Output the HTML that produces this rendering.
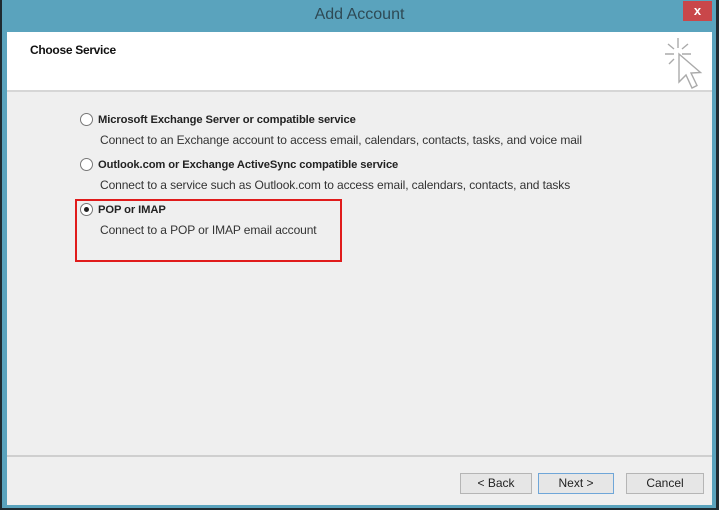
<!DOCTYPE html>
<html><head><style>
body{margin:0;width:719px;height:510px;background:#1f2a30;position:relative;overflow:hidden;font-family:"Liberation Sans",sans-serif}
.frame{position:absolute;left:2px;top:0;width:714px;height:508px;background:#5aa3bd}
.title{position:absolute;left:0;width:719px;top:6px;text-align:center;font-size:16px;color:#2e4a55}
.close{position:absolute;left:683px;top:1px;width:29px;height:20px;background:#c9474a;color:#fff;font-size:13px;text-align:center;line-height:20px;font-weight:bold}
.content{position:absolute;left:7px;top:32px;width:705px;height:473px;background:#efefef}
.head{position:absolute;left:0;top:0;width:705px;height:58px;background:#fff;border-bottom:2px solid #d6d6d6}
.h{position:absolute;left:23px;top:11px;font-size:12px;font-weight:bold;color:#111;letter-spacing:-0.3px}
.opt{position:absolute;left:80px;font-size:12px;color:#222}
.opt b{position:absolute;left:18px;top:1px;white-space:nowrap;font-size:11.2px;letter-spacing:-0.1px}
.opt span{position:absolute;left:20px;top:20px;white-space:nowrap;color:#333;font-size:12px;letter-spacing:-0.1px}
.r{position:absolute;left:0;top:0;width:11px;height:11px;border:1px solid #777;border-radius:50%;background:#fff}
.r.on::after{content:"";position:absolute;left:3px;top:3px;width:5px;height:5px;border-radius:50%;background:#222}
.sep{position:absolute;left:0;top:423px;width:705px;height:2px;background:#cfcfcf}
.btn{position:absolute;top:441px;height:19px;border:1px solid #b5b5b5;background:#e6e6e6;font-size:12px;text-align:center;line-height:19px;color:#222}
.red{position:absolute;left:75px;top:199px;width:263px;height:59px;border:2px solid #e01b1b}
</style></head><body>
<div class="frame"></div>
<div class="title">Add Account</div>
<div class="close">x</div>
<div class="content">
 <div class="head"><div class="h">Choose Service</div>
  <svg style="position:absolute;left:654px;top:4px" width="44" height="56" viewBox="0 0 44 56" fill="none" stroke="#aaa" stroke-width="1.4">
   <path d="M17 2v10M7 8l6 5M4 18h9M27 8l-6 5M30 18h-9M8 28l5-5"/>
   <path d="M18 18l0 28 7-7 6 13 5-2.5-6-12.5 9.5-0.5z" fill="#fff"/>
  </svg>
 </div>
 <div class="sep"></div>
 <div class="btn" style="left:453px;width:70px">&lt; Back</div>
 <div class="btn" style="left:531px;width:74px;border-color:#6fa6d8">Next &gt;</div>
 <div class="btn" style="left:619px;width:76px">Cancel</div>
</div>
<div class="opt" style="top:113px"><div class="r"></div><b>Microsoft Exchange Server or compatible service</b><span>Connect to an Exchange account to access email, calendars, contacts, tasks, and voice mail</span></div>
<div class="opt" style="top:158px"><div class="r"></div><b>Outlook.com or Exchange ActiveSync compatible service</b><span>Connect to a service such as Outlook.com to access email, calendars, contacts, and tasks</span></div>
<div class="opt" style="top:203px"><div class="r on"></div><b>POP or IMAP</b><span>Connect to a POP or IMAP email account</span></div>
<div class="red"></div>
</body></html>
